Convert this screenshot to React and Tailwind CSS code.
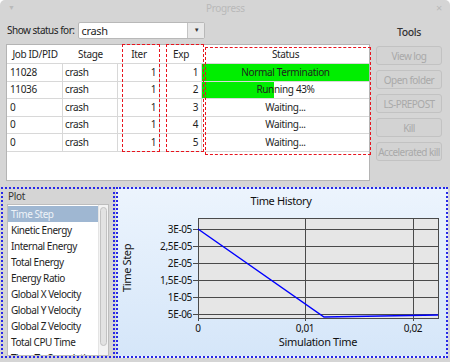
import React from 'react';

const rows = [
  { id: '11028', stage: 'crash', iter: 1, exp: 1, status: 'Normal Termination', pct: 100 },
  { id: '11036', stage: 'crash', iter: 1, exp: 2, status: 'Running 43%', pct: 43 },
  { id: '0', stage: 'crash', iter: 1, exp: 3, status: 'Waiting...', pct: 0 },
  { id: '0', stage: 'crash', iter: 1, exp: 4, status: 'Waiting...', pct: 0 },
  { id: '0', stage: 'crash', iter: 1, exp: 5, status: 'Waiting...', pct: 0 },
];

const plots = [
  'Time Step',
  'Kinetic Energy',
  'Internal Energy',
  'Total Energy',
  'Energy Ratio',
  'Global X Velocity',
  'Global Y Velocity',
  'Global Z Velocity',
  'Total CPU Time',
  'Time To Completion',
];

const tools = ['View log', 'Open folder', 'LS-PREPOST', 'Kill', 'Accelerated kill'];

const ToolButton = ({ label }) => (
  <button
    disabled
    className="h-[19px] w-[66px] rounded-[3px] border border-[#c2c2c2] bg-[#d3d3d3] text-[10px] tracking-[-0.55px] leading-none text-[#a9a9a9] whitespace-nowrap"
  >
    {label}
  </button>
);

// plot area in svg coords: x 80..320, y 29..129
const yTicks = [
  { y: 40, label: '3E-05' },
  { y: 57, label: '2,5E-05' },
  { y: 74, label: '2E-05' },
  { y: 91, label: '1,5E-05' },
  { y: 108, label: '1E-05' },
  { y: 125, label: '5E-06' },
];
const xTicks = [
  { x: 80, label: '0' },
  { x: 187, label: '0,01' },
  { x: 295, label: '0,02' },
];

const Chart = () => (
  <svg width="328" height="166" className="block" style={{ fontFamily: '"Noto Sans", sans-serif' }}>
    <text x="163" y="16" textAnchor="middle" fontSize="11" fill="#111">Time History</text>
    <rect x="80" y="29" width="240" height="100" fill="#e6e6e6" />
    {yTicks.map(t => (
      <g key={t.label}>
        <line x1="75" y1={t.y + 0.5} x2="320" y2={t.y + 0.5} stroke="#4a4a4a" strokeWidth="1" />
        <text x="74" y={t.y + 4} textAnchor="end" fontSize="10" fill="#111">{t.label}</text>
      </g>
    ))}
    {xTicks.map(t => (
      <g key={t.label}>
        <line x1={t.x + 0.5} y1="29" x2={t.x + 0.5} y2="132" stroke="#4a4a4a" strokeWidth="1" />
        <text x={t.x} y="143" textAnchor="middle" fontSize="10" fill="#111">{t.label}</text>
      </g>
    ))}
    <rect x="80.5" y="29.5" width="240" height="100" fill="none" stroke="#4a4a4a" strokeWidth="1" />
    <polyline points="80,40 206,128 320,126" fill="none" stroke="#0000ff" strokeWidth="1.5" />
    <text x="200" y="157" textAnchor="middle" fontSize="11" fill="#111">Simulation Time</text>
    <text x="0" y="0" textAnchor="middle" fontSize="11" fill="#111" transform="translate(13 79) rotate(-90)">Time Step</text>
  </svg>
);

export default function App() {
  return (
    <div
      className="w-[450px] h-[362px] overflow-hidden rounded-t-[5px] bg-[#d5d5d5] text-[10px] tracking-[-0.35px] text-[#1e1e1e] flex flex-col"
      style={{ fontFamily: '"Noto Sans", "Open Sans", sans-serif' }}
    >
      {/* title bar */}
      <div className="h-[17px] flex items-center px-2 text-[10px] text-[#b9b9b9]">
        <span className="text-[7px]">▼</span>
        <span className="flex-1 text-center">Progress</span>
        <span className="text-[11px]">×</span>
      </div>

      <div className="flex px-[6px]">
        <div className="w-[364px] flex flex-col">
          <div className="h-[27px] flex items-center gap-[4px] pl-[1px]">
            <span className="tracking-[-0.5px]">Show status for:</span>
            <div className="h-[17px] w-[127px] flex bg-white border border-[#b8b8b8] rounded-[2px]">
              <span className="flex-1 pl-[2px] leading-[15px] text-[11px]">crash</span>
              <div className="w-[17px] border-l border-[#c4c4c4] bg-[#e8e8e8] flex items-center justify-center text-[6px] text-[#333]">▼</div>
            </div>
          </div>

          {/* table */}
          <div className="relative h-[137px] bg-white border border-[#b4b4b4]">
            <div className="flex h-[19px] border-b border-[#d8d8d8]">
              <div className="w-[56px] flex items-center justify-center">Job ID/PID</div>
              <div className="w-[55px] flex items-center justify-center">Stage</div>
              <div className="w-[42px] flex items-center justify-center">Iter</div>
              <div className="w-[42px] flex items-center justify-center">Exp</div>
              <div className="flex-1 flex items-center justify-center">Status</div>
            </div>
            {rows.map((r, i) => (
              <div key={i} className="flex h-[17.5px] border-b border-[#d8d8d8]">
                <div className="w-[56px] border-r border-[#d8d8d8] pl-[3px] flex items-center">{r.id}</div>
                <div className="w-[55px] border-r border-[#d8d8d8] pl-[2px] flex items-center">{r.stage}</div>
                <div className="w-[42px] border-r border-[#d8d8d8] pr-[3px] flex items-center justify-end">{r.iter}</div>
                <div className="w-[42px] border-r border-[#d8d8d8] pr-[3px] flex items-center justify-end">{r.exp}</div>
                <div className="relative flex-1 flex items-center justify-center">
                  <div className="absolute inset-y-0 left-0 bg-[#00ee00]" style={{ width: `${r.pct}%` }} />
                  <span className="relative">{r.status}</span>
                </div>
              </div>
            ))}
            {/* highlight overlays */}
            <div className="absolute left-[115px] top-[-1px] w-[38px] h-[108px] border border-dashed border-[#e8141e]" />
            <div className="absolute left-[159px] top-[-1px] w-[38px] h-[108px] border border-dashed border-[#e8141e]" />
            <div className="absolute left-[198px] top-[2px] w-[166px] h-[108px] border border-dashed border-[#e8141e]" />
          </div>
        </div>

        <div className="flex-1 flex flex-col items-center">
          <div className="h-[29px] flex items-center justify-center font-medium text-[#333] text-[10.5px] pl-[4px] pt-[3px]">Tools</div>
          <div className="flex flex-col gap-[5px] pl-[4px]">
            {tools.map(t => <ToolButton key={t} label={t} />)}
          </div>
        </div>
      </div>

      {/* bottom */}
      <div className="flex gap-[1px] px-[1px] mt-[6px]">
        <div className="w-[114px] h-[171px] border-2 border-dotted border-[#2828e6] flex flex-col px-[4px]">
          <div className="h-[15px] leading-[15px] text-[#333] pl-[1px]">Plot</div>
          <div className="flex-1 flex bg-white border border-[#bdbdbd] overflow-hidden">
            <div className="flex-1 flex flex-col pt-[1px] tracking-[-0.45px]">
              {plots.map((p, i) => (
                <div
                  key={p}
                  className={`h-[16px] leading-[16px] pl-[3px] whitespace-nowrap ${i === 0 ? 'bg-[#9fb7d2] text-[#eef3f8]' : ''}`}
                >
                  {p}
                </div>
              ))}
            </div>
            <div className="w-[10px] border-l border-[#e4e4e4] bg-[#f3f3f3] py-[2px] flex justify-center">
              <div className="w-[7px] h-[139px] rounded-[4px] border border-[#c2c2c2] bg-[#e2e2e2]" />
            </div>
          </div>
        </div>
        <div className="flex-1 h-[171px] border-2 border-dotted border-[#2828e6] bg-gradient-to-b from-[#ecf4fd] to-[#d5e6f9] mr-[1px]">
          <Chart />
        </div>
      </div>
    </div>
  );
}
